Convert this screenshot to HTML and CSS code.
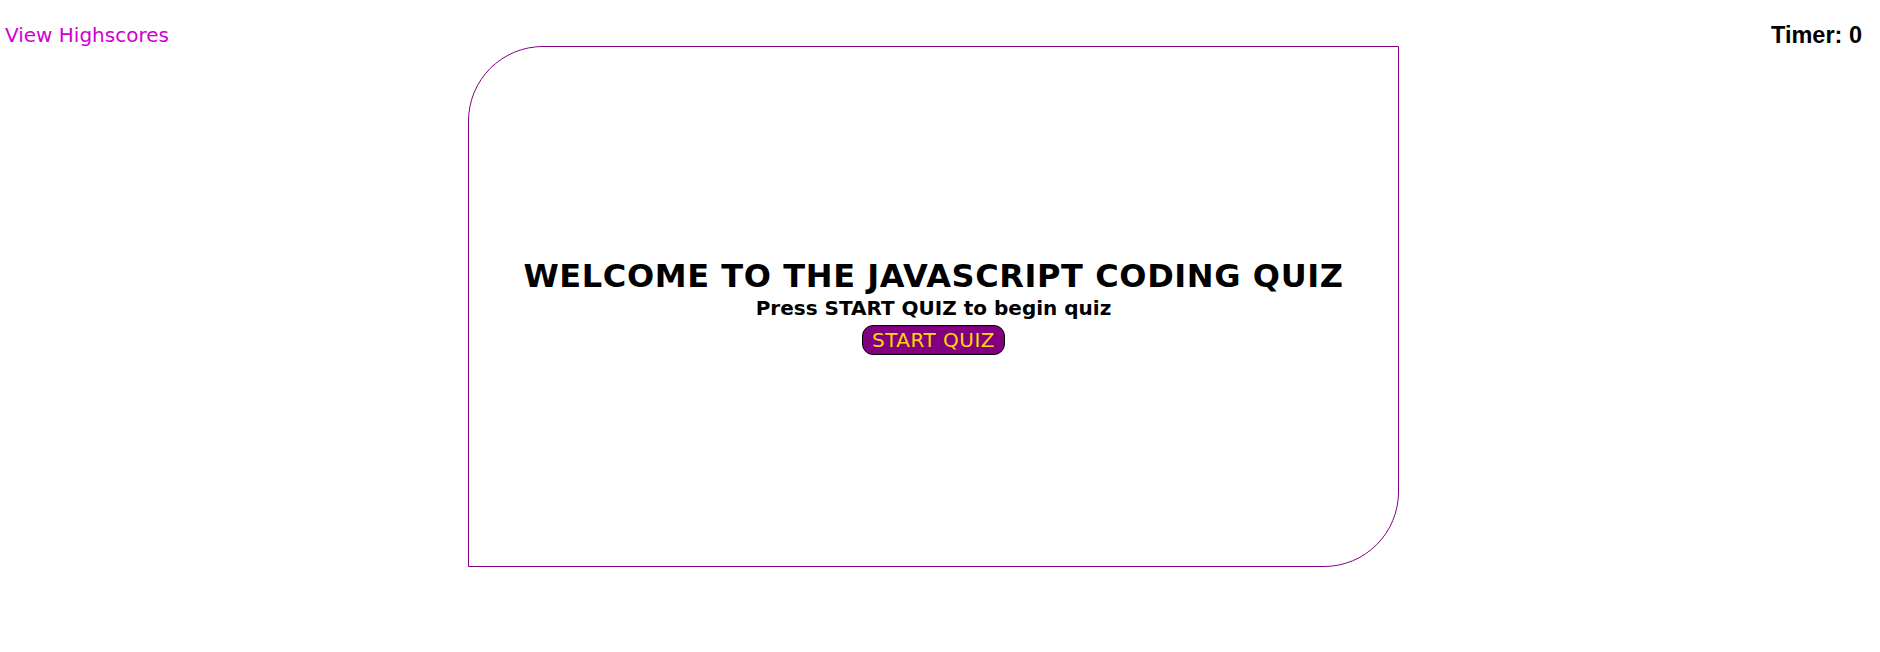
FILE: index.html
```html
<!DOCTYPE html>
<html>
<head>
<meta charset="utf-8">
<link rel="stylesheet" href="styles.css">
</head>
<body>
<header class="top">
  <a class="highscores" href="#">View Highscores</a>
  <div class="timer">Timer: 0</div>
</header>
<main class="card">
  <h1 class="title">WELCOME TO THE JAVASCRIPT CODING QUIZ</h1>
  <p class="subtitle">Press START QUIZ to begin quiz</p>
  <button class="start">START QUIZ</button>
</main>
</body>
</html>
```
FILE: styles.css
```css
html, body {
  margin: 0;
  padding: 0;
  background: #ffffff;
}
body {
  font-family: "DejaVu Sans", Verdana, sans-serif;
  color: #000;
}
.top {
  display: flex;
  justify-content: space-between;
  align-items: center;
  height: 46px;
  padding: 24px 18px 0 5px;
  box-sizing: border-box;
}
.highscores {
  color: #d100d1;
  text-decoration: none;
  font-size: 20px;
}
.timer {
  font-family: "Liberation Sans", Arial, sans-serif;
  font-weight: bold;
  font-size: 23.5px;
}
.card {
  box-sizing: border-box;
  width: 931px;
  height: 521px;
  margin-left: 468px;
  border: 1px solid #800080;
  border-radius: 75px 0 75px 0;
  display: flex;
  flex-direction: column;
  align-items: center;
  justify-content: center;
}
.title {
  margin: 0 0 2px;
  font-size: 32px;
  letter-spacing: 0.6px;
  font-weight: bold;
  line-height: 37px;
}
.subtitle {
  margin: 0;
  font-size: 20px;
  font-weight: bold;
  line-height: 23px;
}
.start {
  margin-top: 5px;
  font-family: "DejaVu Sans", Verdana, sans-serif;
  font-size: 20px;
  letter-spacing: 0.5px;
  line-height: 24px;
  color: #ffd700;
  background: #800080;
  border: 1px solid #000;
  border-radius: 11px;
  padding: 2px 9px;
}
```
